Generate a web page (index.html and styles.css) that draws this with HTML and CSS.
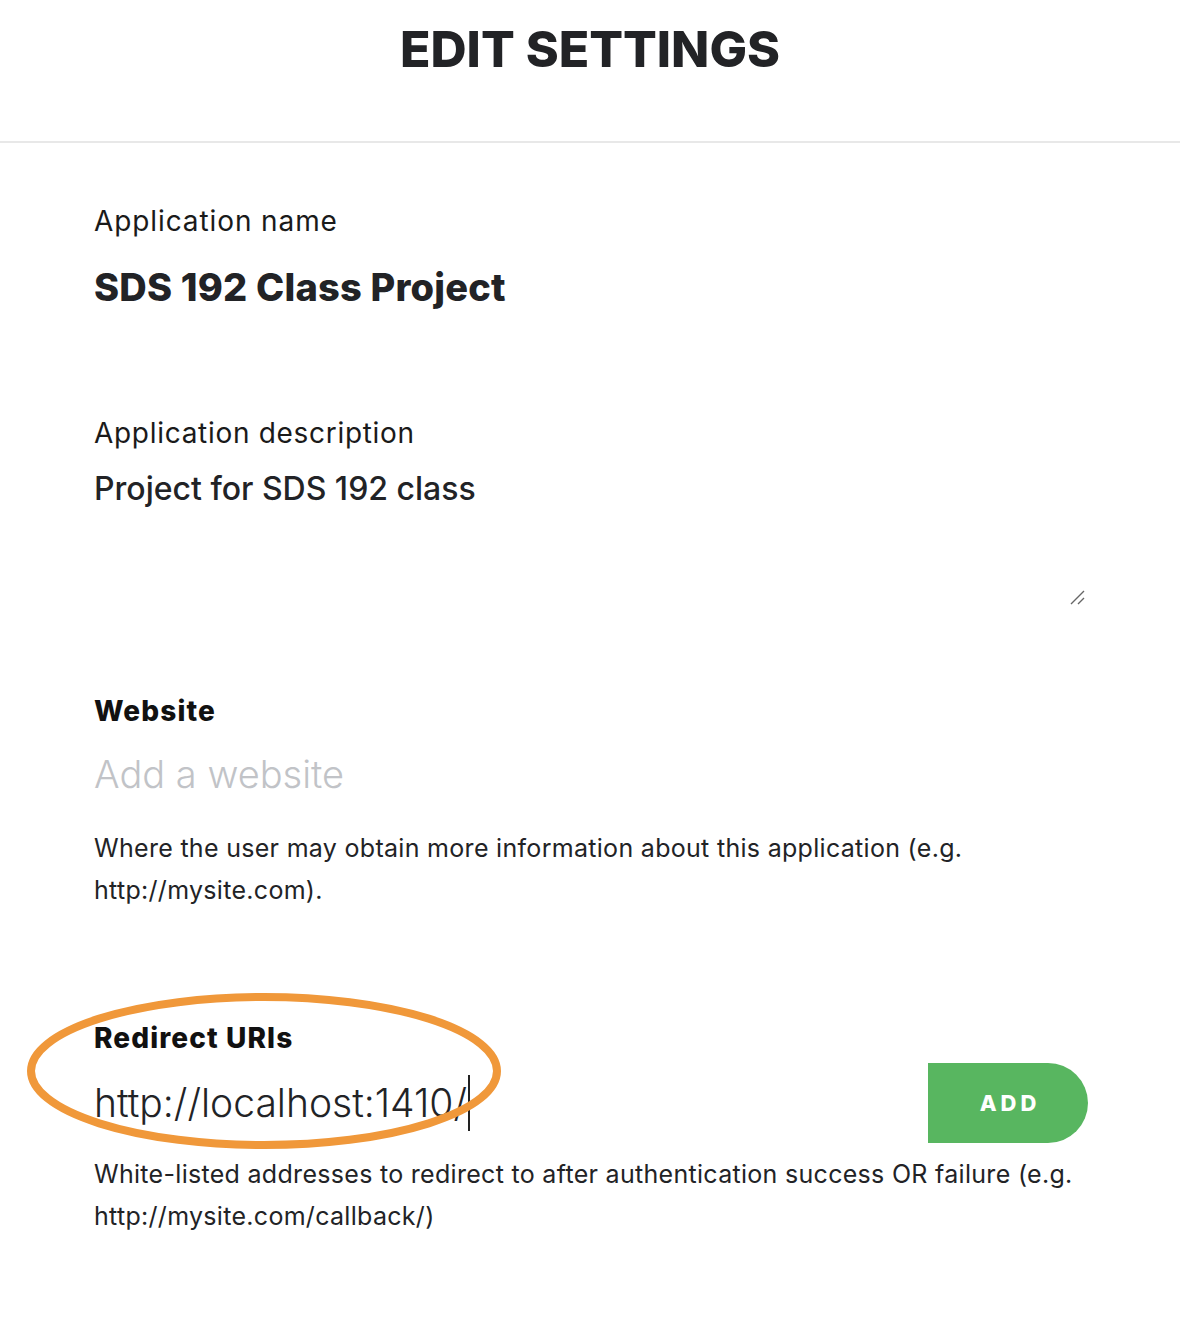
FILE: index.html
```html
<!DOCTYPE html>
<html>
<head>
<meta charset="utf-8">
<link rel="stylesheet" href="styles.css">
</head>
<body>
<header class="page-header">
  <h1 class="title">EDIT SETTINGS</h1>
</header>
<main class="form">
  <section class="field field-name">
    <div class="label">Application name</div>
    <div class="app-name">SDS 192 Class Project</div>
  </section>
  <section class="field field-desc">
    <div class="label">Application description</div>
    <div class="textarea">
      <div class="desc-text">Project for SDS 192 class</div>
      <svg class="resize" width="16" height="16" viewBox="0 0 16 16"><path d="M1 15 L14 2 M8 15 L14 9" stroke="#666" stroke-width="1.4" fill="none"/></svg>
    </div>
  </section>
  <section class="field field-web">
    <div class="label-bold">Website</div>
    <div class="placeholder">Add a website</div>
    <p class="help">Where the user may obtain more information about this application (e.g. http://mysite.com).</p>
  </section>
  <section class="field field-redirect">
    <div class="label-bold">Redirect URIs</div>
    <div class="uri-row">
      <div class="uri-input">http://localhost:1410/<span class="caret"></span></div>
      <button class="add-btn">ADD</button>
    </div>
    <p class="help">White-listed addresses to redirect to after authentication success OR failure (e.g. http://mysite.com/callback/)</p>
    <svg class="highlight" width="476" height="158" viewBox="0 0 476 158"><ellipse cx="238" cy="79" rx="233" ry="74" fill="none" stroke="#f0983a" stroke-width="8"/></svg>
  </section>
</main>
</body>
</html>
```
FILE: styles.css
```css
* { box-sizing: border-box; }
body {
  margin: 0;
  background: #fff;
  color: #222326;
  font-family: "Inter", "Noto Sans", sans-serif;
}
.page-header {
  height: 143px;
  border-bottom: 2px solid #e8e8e8;
  display: flex;
  justify-content: center;
  padding-top: 24px;
}
.title {
  margin: 0;
  font-size: 50px;
  line-height: 50px;
  font-weight: 800;
  letter-spacing: 0;
  color: #222326;
}
.form {
  padding: 0 92px 0 94px;
}
.field { position: relative; }
.field-name { padding-top: 60px; }
.label {
  font-size: 28px;
  line-height: 36px;
  font-weight: 400;
  letter-spacing: 0.9px;
  color: #1a1a1a;
}
.app-name {
  margin-top: 26px;
  font-size: 38px;
  line-height: 44px;
  font-weight: 800;
  letter-spacing: 0.2px;
  color: #222326;
}
.field-desc { margin-top: 106px; }
.field-desc .label { letter-spacing: 0.7px; }
.textarea {
  position: relative;
  height: 154px;
  padding-top: 18px;
}
.desc-text {
  font-size: 32px;
  line-height: 40px;
  font-weight: 500;
}
.resize { position: absolute; right: 2px; bottom: 0; }
.field-web { margin-top: 88px; }
.label-bold {
  font-size: 28px;
  line-height: 36px;
  font-weight: 800;
  letter-spacing: 1.1px;
  color: #111;
}
.placeholder {
  margin-top: 22px;
  font-size: 38px;
  line-height: 46px;
  font-weight: 300;
  color: #c1c3c7;
}
.help {
  margin: 30px 0 0;
  font-size: 25px;
  line-height: 42px;
  font-weight: 400;
  letter-spacing: 0.3px;
  color: #222326;
}
.field-redirect { margin-top: 109px; }
.uri-row {
  display: flex;
  justify-content: space-between;
  align-items: center;
  margin-top: 7px;
}
.uri-input {
  font-size: 39px;
  line-height: 56px;
  font-weight: 300;
  display: flex;
  align-items: center;
}
.caret {
  display: inline-block;
  width: 2px;
  height: 56px;
  background: #222;
  margin-left: 1px;
}
.add-btn {
  width: 160px;
  height: 80px;
  border: 0;
  background: #58b660;
  color: #fff;
  font-family: inherit;
  font-size: 22px;
  font-weight: 800;
  letter-spacing: 4px;
  border-radius: 0 40px 40px 0;
  padding: 0 0 0 4px;
}
.field-redirect .help { margin-top: 10px; }
.highlight {
  position: absolute;
  left: -68px;
  top: -28px;
  pointer-events: none;
}
```
